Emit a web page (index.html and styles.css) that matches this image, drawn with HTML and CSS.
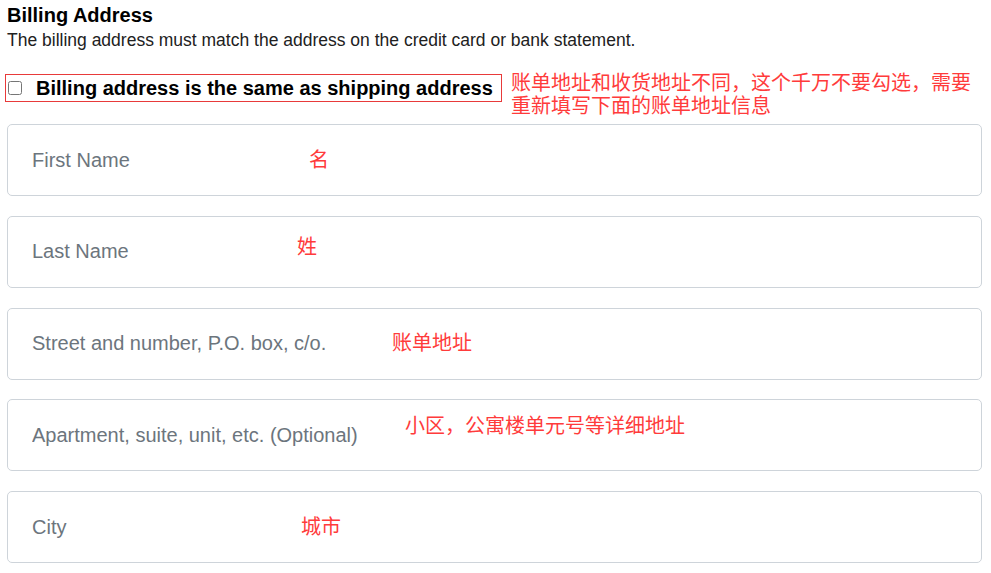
FILE: index.html
```html
<!DOCTYPE html>
<html lang="zh">
<head>
  <meta charset="UTF-8">
  <title>Billing Address</title>
  <link rel="stylesheet" href="styles.css">
</head>
<body>
  <div class="billing">
    <h2 class="title">Billing Address</h2>
    <p class="desc">The billing address must match the address on the credit card or bank statement.</p>

    <div class="same-row">
      <label class="same-box">
        <input type="checkbox" class="same-check">
        <span>Billing address is the same as shipping address</span>
      </label>
      <p class="note-side">账单地址和收货地址不同，这个千万不要勾选，需要重新填写下面的账单地址信息</p>
    </div>

    <div class="field">
      <input type="text" placeholder="First Name">
      <span class="note note-first">名</span>
    </div>
    <div class="field">
      <input type="text" placeholder="Last Name">
      <span class="note note-last">姓</span>
    </div>
    <div class="field">
      <input type="text" placeholder="Street and number, P.O. box, c/o.">
      <span class="note note-street">账单地址</span>
    </div>
    <div class="field">
      <input type="text" placeholder="Apartment, suite, unit, etc. (Optional)">
      <span class="note note-apt">小区，公寓楼单元号等详细地址</span>
    </div>
    <div class="field">
      <input type="text" placeholder="City">
      <span class="note note-city">城市</span>
    </div>
  </div>
</body>
</html>
```

FILE: styles.css
```css
body {
  margin: 0;
  background: #fff;
  font-family: "Liberation Sans", Arial, sans-serif;
  color: #000;
}
.billing {
  width: 975px;
  padding: 3px 0 0 7px;
}
.title {
  margin: 0;
  font-size: 20px;
  line-height: 24px;
  font-weight: bold;
}
.desc {
  margin: 3px 0 0;
  font-size: 17.5px;
  line-height: 21px;
  color: #212121;
}
.same-row {
  display: flex;
  align-items: flex-start;
  margin-top: 19px;
}
.same-box {
  display: flex;
  align-items: center;
  flex: none;
  width: 495px;
  height: 26px;
  margin: 4px 0 0 -2px;
  border: 1px solid #e83a3a;
  font-size: 20px;
  font-weight: bold;
  white-space: nowrap;
}
.same-check {
  width: 14px;
  height: 14px;
  margin: 0 14px 0 2px;
}
.note-side {
  margin: 0 0 0 9px;
  width: 462px;
  font-family: "Noto Sans CJK SC", sans-serif;
  font-size: 20px;
  line-height: 23px;
  color: #ff3b3b;
}
.field {
  position: relative;
  margin-top: 19.8px;
}
.same-row + .field {
  margin-top: 8px;
}
.field input {
  box-sizing: border-box;
  width: 975px;
  height: 72px;
  padding: 0 24px;
  border: 1px solid #ced4da;
  border-radius: 5px;
  font-family: "Liberation Sans", Arial, sans-serif;
  font-size: 20px;
  color: #495057;
  background: #fff;
}
.field input::placeholder {
  color: #6c757d;
}
.note {
  position: absolute;
  font-family: "Noto Sans CJK SC", sans-serif;
  font-size: 20px;
  line-height: 22px;
  color: #ff3b3b;
}
.note-first { left: 302px; top: 24px; }
.note-last { left: 290px; top: 19px; }
.note-street { left: 385px; top: 23px; }
.note-apt { left: 398px; top: 15px; }
.note-city { left: 294px; top: 24px; }
```
